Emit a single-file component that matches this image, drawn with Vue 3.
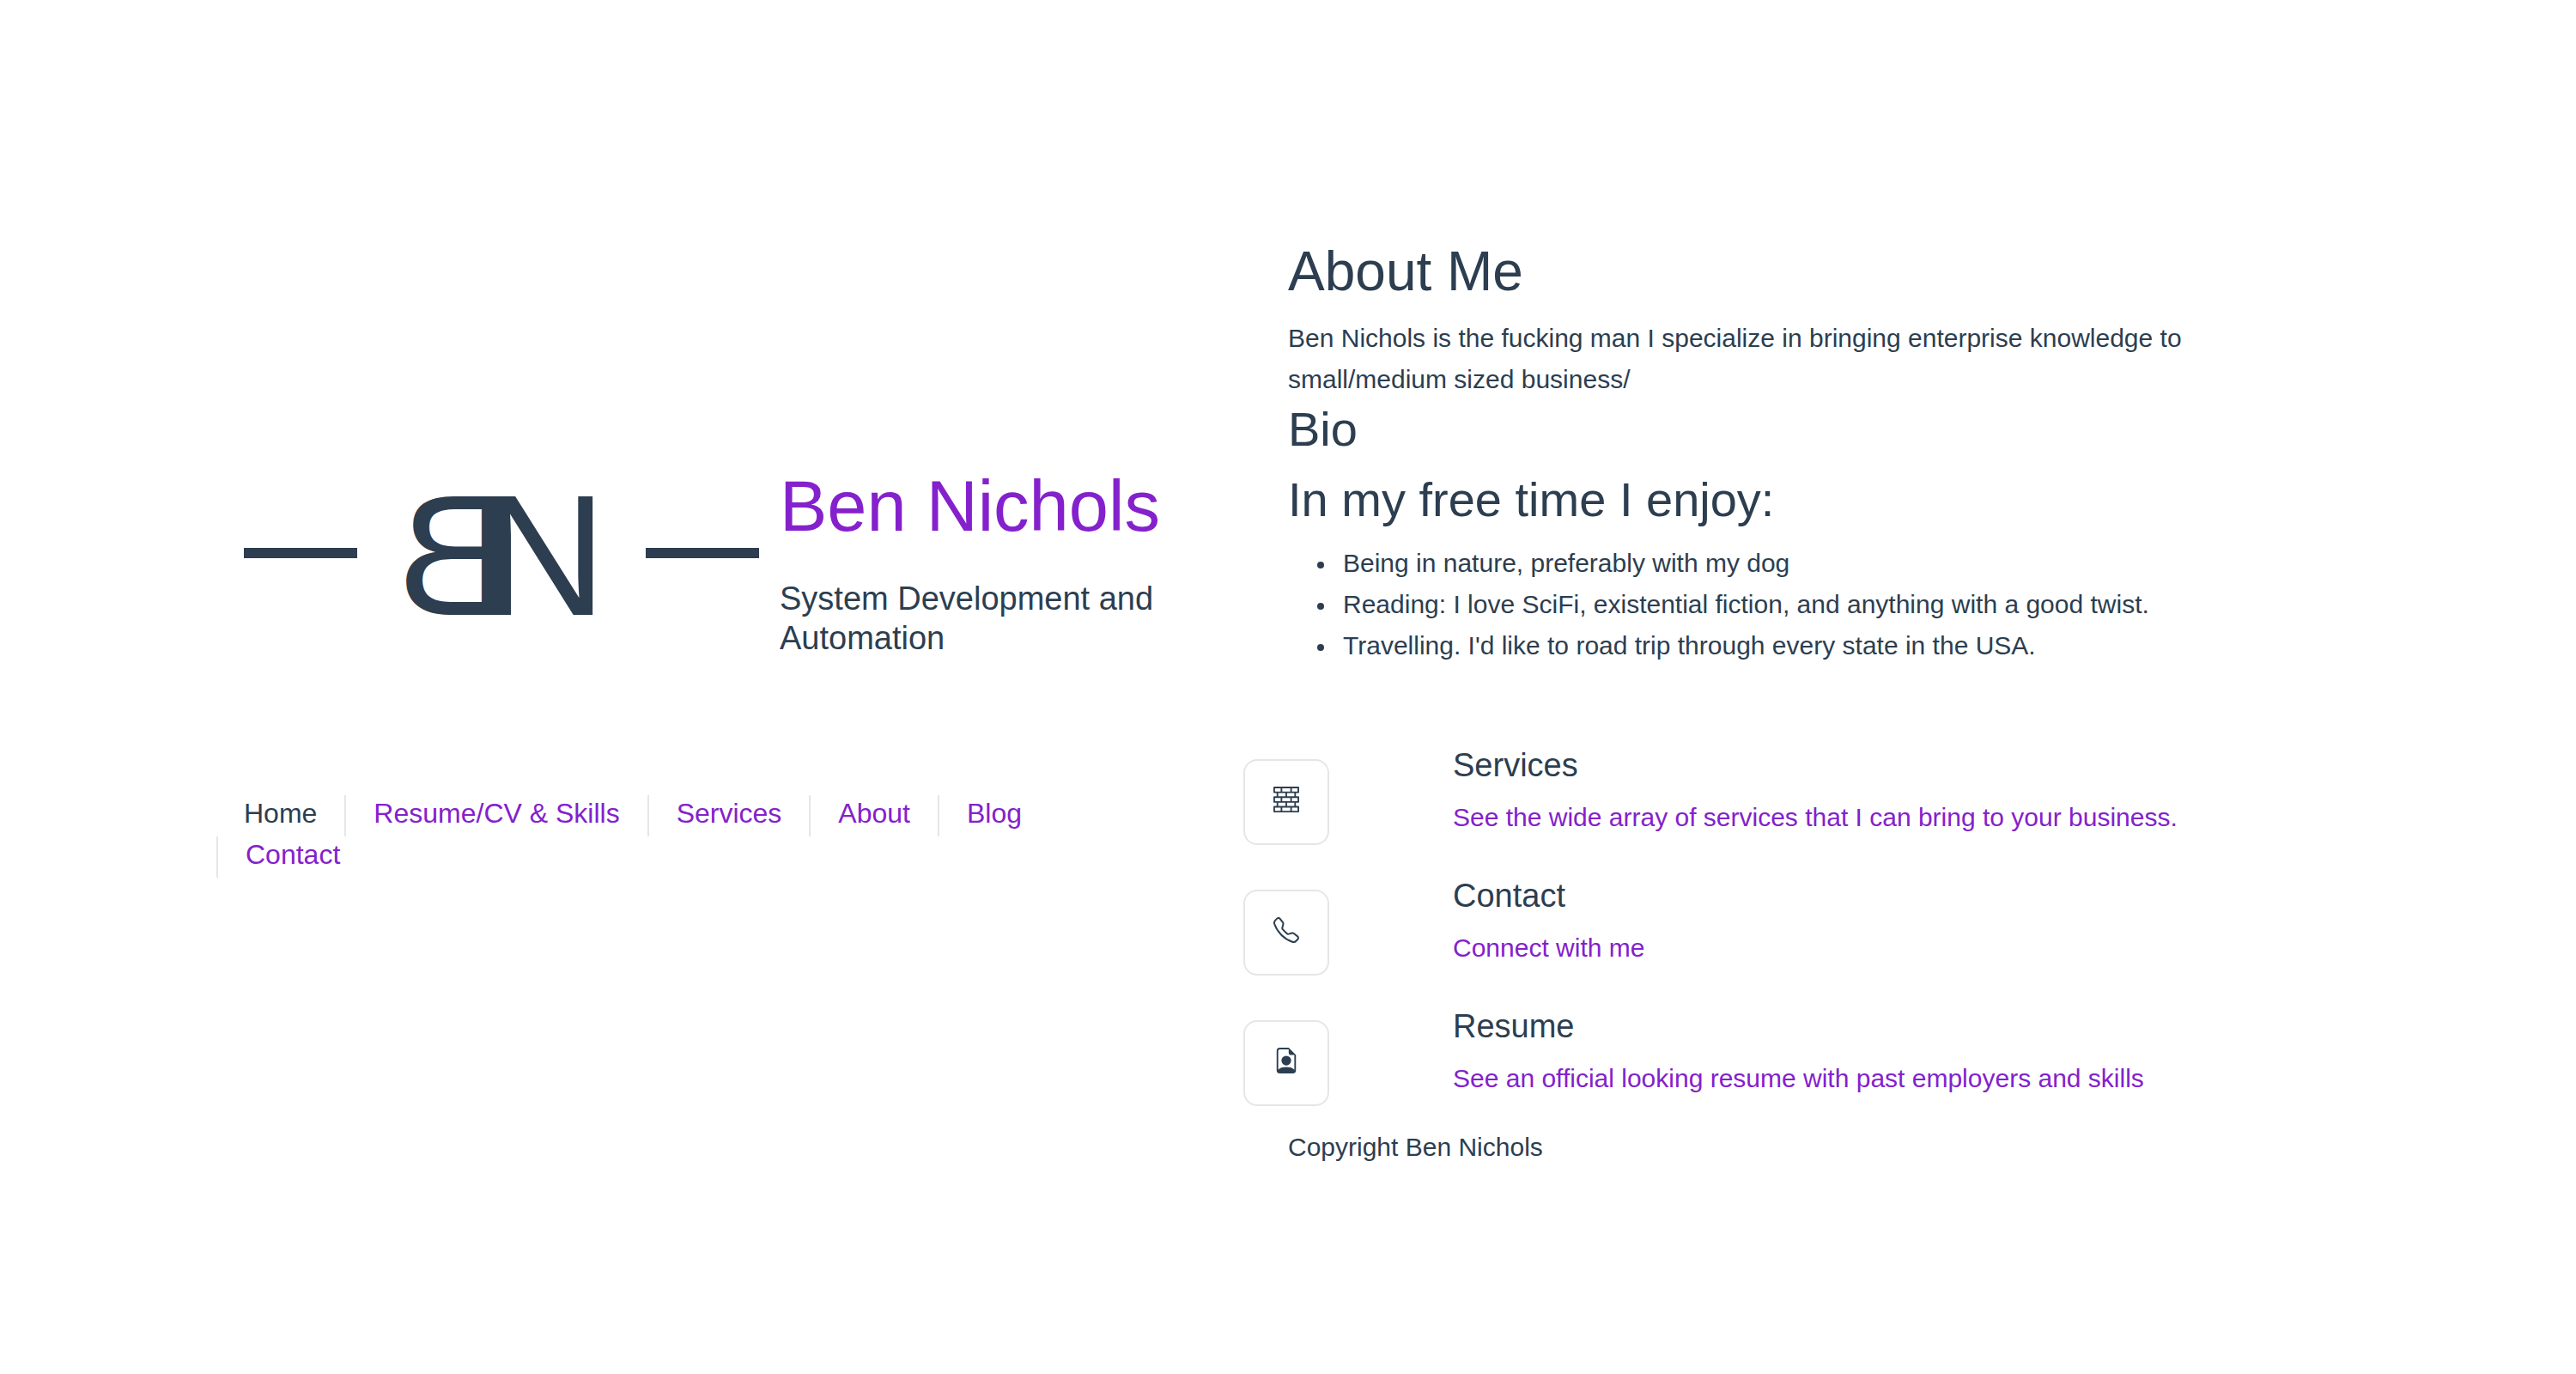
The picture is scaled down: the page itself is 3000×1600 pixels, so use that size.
<script setup>
const navItems = [
  { label: 'Home', current: true },
  { label: 'Resume/CV & Skills' },
  { label: 'Services' },
  { label: 'About' },
  { label: 'Blog' },
  { label: 'Contact' },
]

const hobbies = [
  'Being in nature, preferably with my dog',
  'Reading: I love SciFi, existential fiction, and anything with a good twist.',
  "Travelling. I'd like to road trip through every state in the USA.",
]

const features = [
  {
    title: 'Services',
    text: 'See the wide array of services that I can bring to your business.',
    paths: [
      'M0 .5A.5.5 0 0 1 .5 0h15a.5.5 0 0 1 .5.5v3a.5.5 0 0 1-.5.5H14v2h1.5a.5.5 0 0 1 .5.5v3a.5.5 0 0 1-.5.5H14v2h1.5a.5.5 0 0 1 .5.5v3a.5.5 0 0 1-.5.5H.5a.5.5 0 0 1-.5-.5v-3a.5.5 0 0 1 .5-.5H2v-2H.5a.5.5 0 0 1-.5-.5v-3A.5.5 0 0 1 .5 6H2V4H.5a.5.5 0 0 1-.5-.5v-3zM3 4v2h4.5V4H3zm5.5 0v2H13V4H8.5zM3 10v2h4.5v-2H3zm5.5 0v2H13v-2H8.5zM1 1v2h3.5V1H1zm4.5 0v2h5V1h-5zm6 0v2H15V1h-3.5zM1 7v2h3.5V7H1zm4.5 0v2h5V7h-5zm6 0v2H15V7h-3.5zM1 13v2h3.5v-2H1zm4.5 0v2h5v-2h-5zm6 0v2H15v-2h-3.5z',
    ],
  },
  {
    title: 'Contact',
    text: 'Connect with me',
    paths: [
      'M3.654 1.328a.678.678 0 0 0-1.015-.063L1.605 2.3c-.483.484-.661 1.169-.45 1.77a17.568 17.568 0 0 0 4.168 6.608 17.569 17.569 0 0 0 6.608 4.168c.601.211 1.286.033 1.77-.45l1.034-1.034a.678.678 0 0 0-.063-1.015l-2.307-1.794a.678.678 0 0 0-.58-.122l-2.19.547a1.745 1.745 0 0 1-1.657-.459L5.482 8.062a1.745 1.745 0 0 1-.46-1.657l.548-2.19a.678.678 0 0 0-.122-.58L3.654 1.328zM1.884.511a1.745 1.745 0 0 1 2.612.163L6.29 2.98c.329.423.445.974.315 1.494l-.547 2.19a.678.678 0 0 0 .178.643l2.457 2.457a.678.678 0 0 0 .644.178l2.189-.547a1.745 1.745 0 0 1 1.494.315l2.306 1.794c.829.645.905 1.87.163 2.611l-1.034 1.034c-.74.74-1.846 1.065-2.877.702a18.634 18.634 0 0 1-7.01-4.42 18.634 18.634 0 0 1-4.42-7.009c-.362-1.03-.037-2.137.703-2.877L1.885.511z',
    ],
  },
  {
    title: 'Resume',
    text: 'See an official looking resume with past employers and skills',
    paths: [
      'M11 8a3 3 0 1 1-6 0 3 3 0 0 1 6 0z',
      'M14 14V4.5L9.5 0H4a2 2 0 0 0-2 2v12a2 2 0 0 0 2 2h8a2 2 0 0 0 2-2zM9.5 3A1.5 1.5 0 0 0 11 4.5h2v9.255S12 12 8 12s-5 1.755-5 1.755V2a1 1 0 0 1 1-1h5.5v2z',
    ],
  },
]
</script>

<template>
  <div class="page">
    <header class="intro">
      <div class="brand">
        <svg class="logo" viewBox="0 0 600 200" role="img" aria-label="BN">
          <rect x="0" y="98" width="132" height="12" />
          <rect x="468" y="98" width="132" height="12" />
          <text class="mirrored" x="-312" y="176">B</text>
          <text x="278" y="176">N</text>
        </svg>
        <div class="brand-text">
          <h1><a href="#">Ben Nichols</a></h1>
          <p class="tagline">System Development and Automation</p>
        </div>
      </div>
      <nav>
        <ul class="menu">
          <li v-for="item in navItems" :key="item.label">
            <a href="#" :class="{ current: item.current }">{{ item.label }}</a>
          </li>
        </ul>
      </nav>
    </header>

    <main class="content">
      <section class="about">
        <h2>About Me</h2>
        <p>
          Ben Nichols is the fucking man I specialize in bringing enterprise knowledge to
          small/medium sized business/
        </p>
        <h3>Bio</h3>
        <h3>In my free time I enjoy:</h3>
        <ul class="hobbies">
          <li v-for="hobby in hobbies" :key="hobby">{{ hobby }}</li>
        </ul>
      </section>

      <section class="features">
        <article v-for="feature in features" :key="feature.title" class="feature">
          <span class="icon-box">
            <svg viewBox="0 0 16 16" aria-hidden="true">
              <path v-for="d in feature.paths" :key="d" :d="d" />
            </svg>
          </span>
          <div>
            <h4>{{ feature.title }}</h4>
            <a href="#">{{ feature.text }}</a>
          </div>
        </article>
      </section>

      <footer>Copyright Ben Nichols</footer>
    </main>
  </div>
</template>

<style>
body {
  margin: 0;
  background: #fff;
}
</style>

<style scoped>
.page {
  display: grid;
  grid-template-columns: minmax(0, 1fr) minmax(0, 1fr);
  box-sizing: border-box;
  min-height: 100vh;
  padding: 278px 284px 0;
  color: #2c3e50;
  font-family: "Liberation Sans", Arial, sans-serif;
  font-size: 30px;
  line-height: 48px;
}

h1,
h2,
h3,
h4,
p,
ul {
  margin: 0;
  padding: 0;
  font-weight: 400;
}

a {
  color: #8421cc;
  text-decoration: none;
}

.intro {
  padding: 262px 104px 0 0;
}

.brand {
  display: flex;
  gap: 24px;
}

.logo {
  flex: none;
  width: 600px;
  height: 200px;
  overflow: visible;
  fill: currentColor;
  font-size: 200px;
}

.mirrored {
  transform: scaleX(-1);
}

h1 {
  margin-bottom: 34px;
  font-size: 83px;
  line-height: 100px;
  white-space: nowrap;
}

.tagline,
h4 {
  font-size: 38px;
  line-height: 46px;
}

.menu {
  display: flex;
  flex-wrap: wrap;
  margin: 160px 0 0 -32px;
  list-style: none;
}

.menu li {
  padding: 0 32px 6px;
  border-left: 2px solid #e6e6e6;
  font-size: 32px;
  line-height: 42px;
}

.menu li:first-child {
  border-left-color: transparent;
  padding-left: 30px;
}

.menu .current {
  color: inherit;
}

/* The icon boxes hang into the margin left of the text column. */
.content {
  margin-left: -52px;
}

.about,
footer {
  padding-left: 52px;
}

h2 {
  margin-bottom: 15px;
  font-size: 64px;
  line-height: 77px;
}

h3 {
  margin-bottom: 14px;
  font-size: 56px;
  line-height: 68px;
}

.hobbies {
  padding: 2px 0 0 34px;
  list-style: none;
}

.hobbies li {
  display: flex;
  gap: 22px;
}

.hobbies li::before {
  flex: none;
  width: 8px;
  height: 8px;
  margin-top: 22px;
  border-radius: 50%;
  background: currentColor;
  content: "";
}

.features {
  display: flex;
  flex-direction: column;
  gap: 36px;
  margin: 92px 0 24px;
}

.feature {
  display: flex;
  align-items: flex-start;
  gap: 144px;
}

.icon-box {
  display: flex;
  flex: none;
  justify-content: center;
  box-sizing: border-box;
  width: 100px;
  height: 100px;
  margin-top: 16px;
  padding-top: 30px;
  border: 2px solid #e6e6e6;
  border-radius: 16px;
}

.icon-box svg {
  width: 30px;
  height: 30px;
  fill: currentColor;
}

h4 {
  margin-bottom: 14px;
}
</style>
